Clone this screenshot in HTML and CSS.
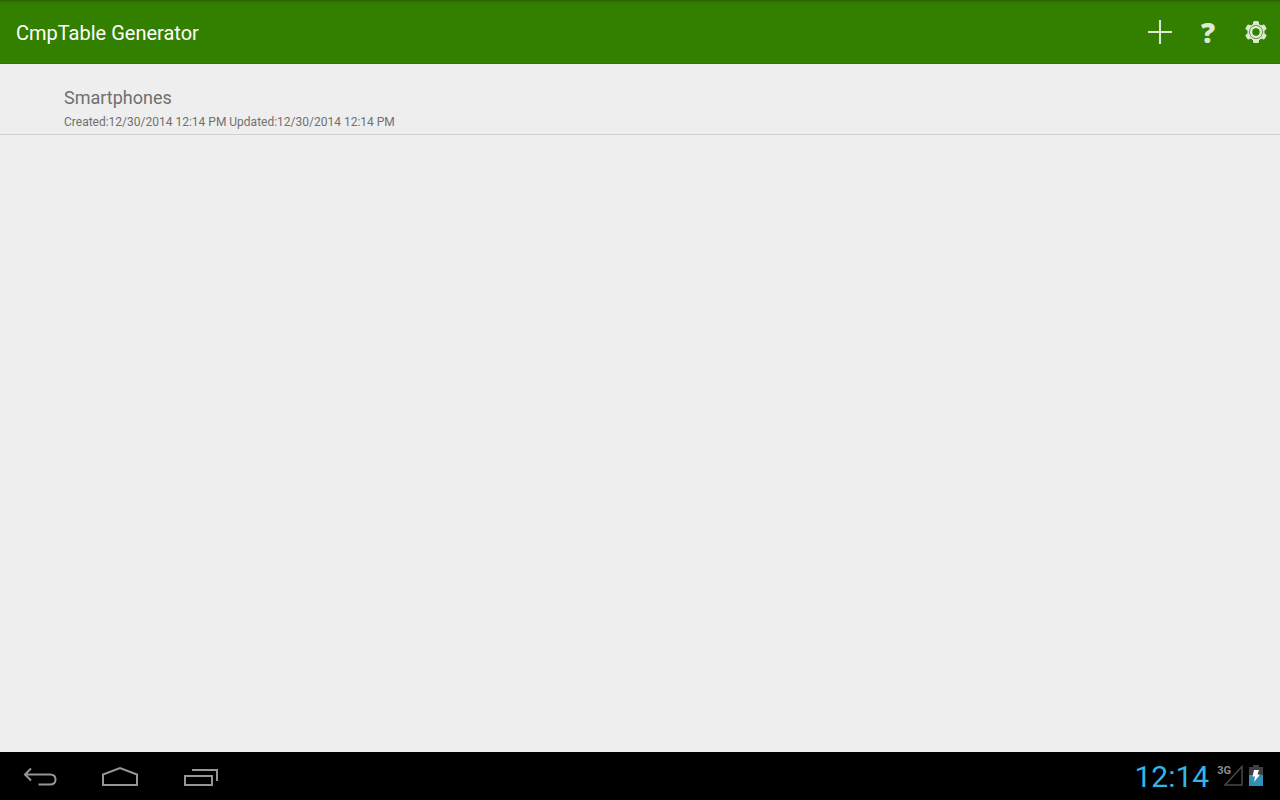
FILE: index.html
```
<!DOCTYPE html>
<html lang="en">
<head>
    <meta charset="UTF-8">
    <meta name="viewport" content="width=device-width, initial-scale=1.0">
    <title>CmpTable Generator</title>
    <link rel="stylesheet" href="styles.css">
</head>
<body>
    <header class="action-bar">
        <h1>CmpTable Generator</h1>
        <button class="action" type="button" aria-label="Add">
            <svg width="24" height="24" viewBox="0 0 24 24">
                <path d="M12 0v24M0 12h24" fill="none" stroke="currentColor" stroke-width="2"/>
            </svg>
        </button>
        <button class="action help" type="button" aria-label="Help">?</button>
        <button class="action" type="button" aria-label="Settings">
            <svg width="24" height="24" viewBox="-12 -12 24 24">
                <g fill="currentColor">
                    <rect id="tooth" x="-3" y="-11" width="6" height="22" rx="1.5"/>
                    <use href="#tooth" transform="rotate(60)"/>
                    <use href="#tooth" transform="rotate(120)"/>
                    <circle r="8.6"/>
                </g>
                <circle class="gear-line" r="6.6"/>
                <circle class="gear-hole" r="3.7"/>
            </svg>
        </button>
    </header>

    <main class="content">
        <ul class="table-list">
            <li>
                <a href="#">
                    <span class="name">Smartphones</span>
                    <span class="dates">Created:12/30/2014 12:14 PM Updated:12/30/2014 12:14 PM</span>
                </a>
            </li>
        </ul>
    </main>

    <footer class="system-bar">
        <nav>
            <button class="nav-key" type="button" aria-label="Back">
                <svg width="36" height="20" viewBox="0 0 36 20">
                    <path d="M9 2.500L3 8.500l6 6M3 8.500h25c4 0 5.500 2 5.500 5s-1.500 5-5.500 5H16.500"/>
                </svg>
            </button>
            <button class="nav-key" type="button" aria-label="Home">
                <svg width="38" height="20" viewBox="0 0 38 20">
                    <path d="M2 8.500L19 2l17 6.500V19H2z"/>
                </svg>
            </button>
            <button class="nav-key" type="button" aria-label="Recent apps">
                <svg width="36" height="20" viewBox="0 0 36 20">
                    <path d="M3 10h27v9H3zM10 4h25v11"/>
                </svg>
            </button>
        </nav>
        <div class="status">
            <time class="clock">12:14</time>
            <span class="network">3G</span>
            <svg class="signal" width="20" height="22" viewBox="0 0 20 22">
                <path d="M19 1.500V20H2z" fill="none" stroke="#484848" stroke-width="1.500"/>
            </svg>
            <svg width="14" height="22" viewBox="0 0 14 22">
                <path d="M4 0h6v2h4v8H0V2h4z" fill="#404040"/>
                <path d="M0 10h14v11H0z" fill="#338fb5"/>
                <path d="M5 5h5L8.500 9.500H11L5 17l1-5.500H3.500z" fill="#fff"/>
            </svg>
        </div>
    </footer>
</body>
</html>
```
FILE: styles.css
```
* {
    box-sizing: border-box;
}

body {
    margin: 0;
    min-height: 100vh;
    display: flex;
    flex-direction: column;
    background-color: #eeeeee;
    font-family: Roboto, sans-serif;
}

button {
    border: none;
    padding: 0;
    background: none;
    cursor: pointer;
}

/* Top action bar */
.action-bar {
    display: flex;
    align-items: center;
    height: 64px;
    padding-left: 16px;
    background: linear-gradient(#276100, #2f7800 2px, #338000 6px);
    box-shadow: inset 0 -1px #2f7800;
    color: #ffffff;
}

.action-bar h1 {
    margin: 0;
    flex: 1;
    padding-top: 2px;
    font-size: 20px;
    line-height: 24px;
    font-weight: 400;
}

.action {
    display: flex;
    align-items: center;
    justify-content: center;
    width: 48px;
    height: 48px;
    color: #dcead4;
}

.help {
    font: 800 28px "Open Sans", sans-serif;
}

.gear-line {
    fill: none;
    stroke: #338000;
    stroke-width: 1;
    opacity: 0.7;
}

.gear-hole {
    fill: #338000;
}

/* Saved tables */
.content {
    flex: 1;
}

.table-list {
    margin: 0;
    padding: 0;
    list-style: none;
}

.table-list a {
    display: flex;
    flex-direction: column;
    padding: 22px 64px 0;
    border-bottom: 1px solid #d0d0d0;
    color: #707070;
    text-decoration: none;
}

.name {
    font-size: 18px;
    line-height: 24px;
}

.dates {
    font-size: 12px;
    line-height: 24px;
}

/* Bottom system bar */
.system-bar {
    display: flex;
    align-items: center;
    justify-content: space-between;
    height: 48px;
    padding-right: 17px;
    background-color: #000000;
}

.system-bar nav {
    display: flex;
}

.nav-key {
    display: flex;
    align-items: center;
    justify-content: center;
    width: 80px;
    height: 48px;
}

.nav-key path {
    fill: none;
    stroke: #969696;
    stroke-width: 2;
}

.status {
    display: flex;
    align-items: center;
}

.clock {
    margin-right: 8px;
    color: #33b5e5;
    font-size: 30px;
    line-height: 36px;
    padding-top: 2px;
}

.network {
    align-self: flex-start;
    margin-right: -8px;
    color: #8c8c8c;
    font: 700 11px/28px Roboto, sans-serif;
}

.signal {
    margin-right: 6px;
}
```
